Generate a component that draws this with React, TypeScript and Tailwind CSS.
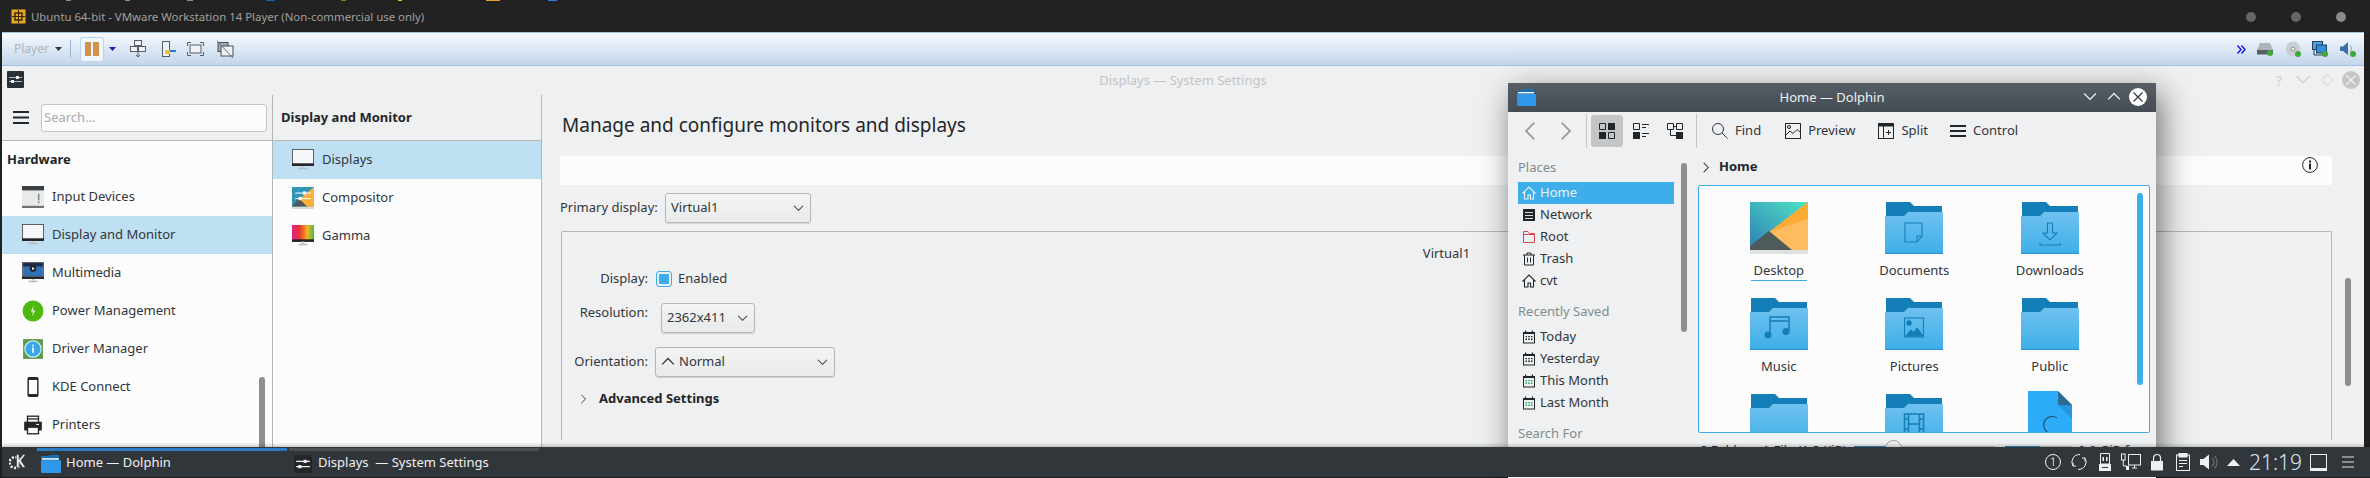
import React from "react";

const FONT = "font-['Noto_Sans','Open_Sans',sans-serif]";

const Chevron = ({ dir = "down", className = "", w = 12, color = "#4d4d4d" }: { dir?: string; className?: string; w?: number; color?: string }) => {
  const d: Record<string, string> = {
    down: "M1 3 L6 8 L11 3",
    up: "M1 8 L6 3 L11 8",
    left: "M8 1 L3 6 L8 11",
    right: "M4 1 L9 6 L4 11",
  };
  return (
    <svg width={w} height={w} viewBox="0 0 12 12" className={className} fill="none" stroke={color} strokeWidth="1.1">
      <path d={d[dir]} />
    </svg>
  );
};

const MonitorFrame = ({ children, bezel = "#232629" }: { children?: React.ReactNode; bezel?: string }) => (
  <svg width="22" height="22" viewBox="0 0 20 20" className="shrink-0">
    <rect x="6" y="17" width="8" height="1.4" fill="#b9bcbe" />
    <rect x="9" y="15" width="2" height="2" fill="#c8cacc" />
    <rect x="0.5" y="0.5" width="19" height="14.5" fill="#f4f6f8" stroke="#4d4f52" strokeWidth="0.8" />
    {children}
    <rect x="0" y="13" width="20" height="2.4" fill={bezel} />
  </svg>
);

const InputIcon = () => (
  <svg width="22" height="22" viewBox="0 0 20 20" className="shrink-0">
    <rect y="0" width="20" height="20" fill="#e9eaea" />
    <rect y="0" width="20" height="4" fill="#3b4045" />
    <rect y="18" width="20" height="2" fill="#6f7376" />
    <rect x="14.5" y="7" width="1.4" height="6" fill="#7f8c8d" />
    <rect x="14.5" y="14" width="1.4" height="1.5" fill="#7f8c8d" />
  </svg>
);

const PowerIcon = () => (
  <svg width="22" height="22" viewBox="0 0 20 20" className="shrink-0">
    <circle cx="10" cy="10" r="9.5" fill="#4fb80f" />
    <path d="M10.8 5 L8 10.5 H10 L9.2 15 L12 9.5 H10Z" fill="#e8f8dc" />
  </svg>
);

const DriverIcon = () => (
  <svg width="22" height="22" viewBox="0 0 20 20" className="shrink-0">
    <rect x="1" y="1" width="18" height="18" fill="#5b9a4a" />
    <circle cx="10" cy="10" r="7.4" fill="#39a9e6" stroke="#d8f0fb" strokeWidth="1" />
    <rect x="9.2" y="8.6" width="1.6" height="5" fill="#e8f6fd" />
    <rect x="9.2" y="6" width="1.6" height="1.6" fill="#e8f6fd" />
  </svg>
);

const PhoneIcon = () => (
  <svg width="22" height="22" viewBox="0 0 20 20" className="shrink-0">
    <rect x="5.6" y="1.6" width="8.8" height="16.8" rx="1" fill="#fcfcfc" stroke="#232629" strokeWidth="1.3" />
    <rect x="5.6" y="1.6" width="8.8" height="2" fill="#232629" />
    <rect x="5.6" y="16.4" width="8.8" height="2" fill="#232629" />
  </svg>
);

const PrinterIcon = () => (
  <svg width="22" height="22" viewBox="0 0 20 20" className="shrink-0" fill="none" stroke="#232629" strokeWidth="1.2">
    <rect x="5" y="2" width="10" height="6" />
    <path d="M5 4.5 H15" />
    <rect x="2.6" y="7.6" width="14.8" height="6.8" fill="#232629" />
    <rect x="5" y="12" width="10" height="6" fill="#fcfcfc" />
    <rect x="13" y="9" width="2.4" height="1" fill="#fcfcfc" stroke="none" />
  </svg>
);

const SliderGlyph = () => (
  <g>
    <rect x="3" y="5" width="14" height="1" fill="#f4f6f8" />
    <rect x="10" y="4" width="3" height="3" fill="#f4f6f8" />
    <rect x="3" y="10" width="14" height="1" fill="#f4f6f8" />
    <rect x="6" y="9" width="3" height="3" fill="#f4f6f8" />
  </g>
);

const categories: { label: string; icon: React.ReactNode; active?: boolean }[] = [
  { label: "Input Devices", icon: <InputIcon /> },
  { label: "Display and Monitor", icon: <MonitorFrame />, active: true },
  {
    label: "Multimedia",
    icon: (
      <MonitorFrame>
        <rect x="1" y="1" width="18" height="12" fill="#2f6fb6" />
        <rect x="1" y="1" width="18" height="3" fill="#1c2c44" />
        <circle cx="10" cy="6" r="3" fill="#1f2326" />
        <path d="M9.2 4.6 L11.6 6 L9.2 7.4Z" fill="#fff" />
      </MonitorFrame>
    ),
  },
  { label: "Power Management", icon: <PowerIcon /> },
  { label: "Driver Manager", icon: <DriverIcon /> },
  { label: "KDE Connect", icon: <PhoneIcon /> },
  { label: "Printers", icon: <PrinterIcon /> },
];

const subItems: { label: string; icon: React.ReactNode; active?: boolean }[] = [
  { label: "Displays", icon: <MonitorFrame />, active: true },
  {
    label: "Compositor",
    icon: (
      <svg width="22" height="22" viewBox="0 0 20 20" className="shrink-0">
        <rect width="20" height="18" fill="#2f97b5" />
        <path d="M20 0 V18 H8 L3 14Z" fill="#fdaf3b" />
        <path d="M0 18 L6 10 L14 18Z" fill="#50585c" />
        <rect y="18" width="20" height="2" fill="#d7dadb" />
        <SliderGlyph />
      </svg>
    ),
  },
  {
    label: "Gamma",
    icon: (
      <svg width="22" height="22" viewBox="0 0 20 20" className="shrink-0">
        <defs>
          <linearGradient id="gammaA" x1="0" x2="1" y1="0" y2="0">
            <stop offset="0" stopColor="#e0208c" />
            <stop offset="0.35" stopColor="#e8352c" />
            <stop offset="0.7" stopColor="#f2b320" />
            <stop offset="1" stopColor="#3fbf50" />
          </linearGradient>
        </defs>
        <rect y="0" width="20" height="14" fill="url(#gammaA)" />
        <rect y="13" width="20" height="2.4" fill="#232629" />
        <rect x="9" y="15" width="2" height="2" fill="#c8cacc" />
        <rect x="6" y="17" width="8" height="1.4" fill="#b9bcbe" />
      </svg>
    ),
  },
];

const Combo = ({ width, children }: { width: string; children: React.ReactNode }) => (
  <div className={`${width} h-[30px] shrink-0 flex items-center justify-between pl-[5px] pr-[6px] rounded-[3px] border border-[#b4b6b8] bg-gradient-to-b from-[#f3f4f4] to-[#e9eaeb] shadow-[0_1px_1px_rgba(0,0,0,0.12)] text-[#31363b]`}>
    <span className="flex items-center gap-[4px]">{children}</span>
    <Chevron dir="down" w={11} color="#31363b" />
  </div>
);

const Folder = ({ id, overlay }: { id: string; overlay?: React.ReactNode }) => (
  <svg width="58" height="52" viewBox="0 0 58 52">
    <defs>
      <linearGradient id={id} x1="0" x2="0" y1="0" y2="1">
        <stop offset="0" stopColor="#6fc1ef" />
        <stop offset="1" stopColor="#3daee9" />
      </linearGradient>
    </defs>
    <path d="M1 0 H25 L29 4 H57 V14 H1Z" fill="#147eb8" />
    <path d="M0 14 H19 L23 10 H58 V52 H0Z" fill={`url(#${id})`} />
    <rect y="51" width="58" height="1" fill="#2a8fcc" />
    <g fill="none" stroke="#147eb8" strokeWidth="1.1">{overlay}</g>
  </svg>
);

const DesktopThumb = () => (
  <svg width="58" height="52" viewBox="0 0 58 52">
    <defs>
      <linearGradient id="thumbBg" x1="0" x2="1" y1="1" y2="0">
        <stop offset="0" stopColor="#2f7fb6" />
        <stop offset="1" stopColor="#4fe3c4" />
      </linearGradient>
    </defs>
    <rect width="58" height="48" fill="url(#thumbBg)" />
    <path d="M58 0 V48 H40 L19 30Z" fill="#fdac33" />
    <path d="M19 30 L58 17 V48 H40Z" fill="#fdbd5e" />
    <path d="M0 48 V44 L19 29 L42 48Z" fill="#4f5a5a" />
    <rect y="48" width="58" height="4" fill="#dfe1e1" />
  </svg>
);

const FileThumb = () => (
  <svg width="44" height="60" viewBox="0 0 44 60" className="-mt-[3px]">
    <path d="M0 0 H30 L44 14 V60 H0Z" fill="#2cabf8" />
    <path d="M30 0 L44 14 H30Z" fill="#2f6a93" />
    <path d="M30 14 H44 V28Z" fill="#2696db" />
    <path d="M30 27 A8.5 8.5 0 1 0 30 41" fill="none" stroke="#1d4f73" strokeWidth="1.2" transform="translate(-1 0)" />
  </svg>
);

// third row is cut off by the view, its labels never show
const files: { key: string; label?: string; thumb: React.ReactNode; underline?: boolean }[] = [
  { key: "desktop", label: "Desktop", thumb: <DesktopThumb />, underline: true },
  {
    key: "docs",
    label: "Documents",
    thumb: <Folder id="fDocs" overlay={<path d="M20 21 H37 V34 L32 40 H20Z M37 34 H32 V40" />} />,
  },
  {
    key: "down",
    label: "Downloads",
    thumb: <Folder id="fDown" overlay={<path d="M26.5 21 H31.5 V31 H36 L29 38 L22 31 H26.5 Z M19 41 V43 H39 V41" />} />,
  },
  {
    key: "music",
    label: "Music",
    thumb: (
      <Folder
        id="fMusic"
        overlay={
          <>
            <path d="M20 36 V19 H39 V33 M20 23 H39" strokeWidth="1.5" />
            <circle cx="18" cy="37" r="3" fill="#147eb8" />
            <circle cx="36" cy="33.5" r="3" fill="#147eb8" />
          </>
        }
      />
    ),
  },
  {
    key: "pics",
    label: "Pictures",
    thumb: (
      <Folder
        id="fPics"
        overlay={
          <>
            <rect x="19.5" y="20" width="19" height="19" />
            <circle cx="24" cy="25" r="2.2" fill="#147eb8" />
            <path d="M21 38 L26 32 L29 35 L32 30 L38 38Z" fill="#147eb8" />
          </>
        }
      />
    ),
  },
  { key: "pub", label: "Public", thumb: <Folder id="fPub" /> },
  { key: "tpl", thumb: <Folder id="fTpl" /> },
  {
    key: "vid",
    thumb: (
      <Folder
        id="fVid"
        overlay={<path d="M19.5 20 H38.5 V40 H19.5Z M23.5 20 V40 M34.5 20 V40 M23.5 30 H34.5 M19.5 25 H23.5 M34.5 25 H38.5 M19.5 35 H23.5 M34.5 35 H38.5" strokeWidth="1.6" />}
      />
    ),
  },
  { key: "cvt", thumb: <FileThumb /> },
];

const HomeGlyph = ({ color }: { color: string }) => (
  <svg width="14" height="14" viewBox="0 0 14 14" fill="none" stroke={color} strokeWidth="1.1">
    <path d="M0.5 7.5 L7 1 L13.5 7.5 M2.5 6 V13 H6 V9 H8.5 V13 H11.5 V6" />
  </svg>
);

const NetworkGlyph = () => (
  <svg width="14" height="14" viewBox="0 0 14 14">
    <rect x="1" y="1" width="12" height="12" fill="#232629" />
    <path d="M3 4.5 H11 M3 7.5 H11 M3 10.5 H11" stroke="#eff0f1" strokeWidth="0.9" />
  </svg>
);

const RootGlyph = () => (
  <svg width="14" height="14" viewBox="0 0 14 14" fill="none" stroke="#da4453" strokeWidth="1">
    <path d="M1.5 12.5 V1.5 H6 L7.5 3.5 H12.5 V12.5Z M1.5 4.5 H12.5" />
  </svg>
);

const TrashGlyph = () => (
  <svg width="14" height="14" viewBox="0 0 14 14" fill="none" stroke="#232629" strokeWidth="1">
    <path d="M1 3 H13 M5 3 V1 H9 V3 M2.5 3 V13 H11.5 V3 M5.5 5.5 V10.5 M8.5 5.5 V10.5" />
  </svg>
);

const CalendarGlyph = ({ color = "#232629" }: { color?: string }) => (
  <svg width="14" height="14" viewBox="0 0 14 14">
    <rect x="1.5" y="2.5" width="11" height="10.5" fill="none" stroke="#232629" />
    <rect x="1" y="2" width="12" height="2" fill="#232629" />
    <rect x="3" y="0.5" width="1.2" height="2" fill="#232629" />
    <rect x="9.8" y="0.5" width="1.2" height="2" fill="#232629" />
    <path d="M3.5 6 H5 V7.3 H3.5Z M6.2 6 H7.8 V7.3 H6.2Z M9 6 H10.5 V7.3 H9Z M3.5 8.6 H5 V10 H3.5Z M6.2 8.6 H7.8 V10 H6.2Z M9 8.6 H10.5 V10 H9Z" fill={color} />
  </svg>
);

const PlaceRow = ({ icon, label, active }: { icon: React.ReactNode; label: string; active?: boolean }) => (
  <div className={`h-[22px] w-[156px] flex items-center pl-[4px] ${active ? "bg-[#3daee9] text-[#eff0f1]" : "text-[#31363b]"}`}>
    <span className="w-[14px] h-[14px] flex">{icon}</span>
    <span className="ml-[4px]">{label}</span>
  </div>
);

const ToolLabel = ({ icon, label, className = "" }: { icon: React.ReactNode; label: string; className?: string }) => (
  <div className={`flex items-center gap-[7px] text-[#31363b] ${className}`}>
    {icon}
    <span>{label}</span>
  </div>
);

const Dolphin = () => (
  <div className={`absolute left-[1508px] top-[83px] z-10 w-[648px] h-[400px] bg-[#eff0f1] shadow-[5px_10px_30px_rgba(0,0,0,0.55)] overflow-hidden text-[13px] ${FONT}`}>
    <div className="relative h-[29px] flex items-center justify-center bg-gradient-to-b from-[#565e66] to-[#454c53] text-[#eff0f1]">
      <svg width="19" height="17" viewBox="0 0 19 17" className="absolute left-[9px] top-[6px]">
        <path d="M0 1 H7 L8 0 H17 V6 H0Z" fill="#1a6fb0" />
        <rect x="1" y="3" width="16" height="1.4" fill="#fff" />
        <rect y="5" width="19" height="12" rx="1" fill="#2f98ea" />
      </svg>
      <span>Home — Dolphin</span>
      <div className="absolute right-[9px] top-[5px] flex items-center">
        <Chevron dir="down" w={14} color="#eff0f1" />
        <Chevron dir="up" w={14} color="#eff0f1" className="ml-[10px]" />
        <span className="ml-[8px] w-[18px] h-[18px] rounded-full bg-white flex items-center justify-center">
          <svg width="10" height="10" viewBox="0 0 10 10" stroke="#31363b" strokeWidth="1.2">
            <path d="M0.5 0.5 L9.5 9.5 M9.5 0.5 L0.5 9.5" />
          </svg>
        </span>
      </div>
    </div>

    <div className="h-[38px] flex items-center">
      <Chevron dir="left" w={20} color="#9a9c9e" className="ml-[13px]" />
      <Chevron dir="right" w={20} color="#9a9c9e" className="ml-[14px]" />
      <div className="ml-[11px] w-px h-[34px] bg-[#c4c5c6]" />
      <div className="ml-[4px] w-[32px] h-[32px] rounded-[3px] bg-[#c4c5c6] flex items-center justify-center">
        <svg width="16" height="16" viewBox="0 0 16 16" fill="#232629">
          <path d="M0.5 0.5 H6.5 V6.5 H0.5Z M9.5 9.5 H15.5 V15.5 H9.5Z" fill="none" stroke="#232629" />
          <rect x="9" width="7" height="7" />
          <rect y="9" width="7" height="7" />
        </svg>
      </div>
      <div className="w-[36px] flex justify-center">
        <svg width="16" height="16" viewBox="0 0 16 16" fill="#232629">
          <path d="M0.5 0.5 H6.5 V6.5 H0.5Z" fill="none" stroke="#232629" />
          <rect y="9" width="7" height="7" />
          <rect x="9" y="1" width="7" height="1" />
          <rect x="9" y="4" width="4" height="1" />
          <rect x="9" y="10" width="7" height="1" />
          <rect x="9" y="13" width="4" height="1" />
        </svg>
      </div>
      <div className="w-[32px] flex justify-center">
        <svg width="16" height="16" viewBox="0 0 16 16" fill="#232629">
          <path d="M0.5 0.5 H6.5 V6.5 H0.5Z M9.5 0.5 H15.5 V6.5 H9.5Z M3.5 6.5 V12.5 H9 M6.5 3.5 H9.5" fill="none" stroke="#232629" />
          <rect x="9" y="9" width="7" height="7" />
        </svg>
      </div>
      <div className="ml-[5px] w-px h-[34px] bg-[#c4c5c6]" />
      <ToolLabel
        className="ml-[15px]"
        label="Find"
        icon={
          <svg width="16" height="16" viewBox="0 0 16 16" fill="none" stroke="#31363b" strokeWidth="1">
            <circle cx="6" cy="6" r="5.5" />
            <path d="M10 10 L15.5 15.5" />
          </svg>
        }
      />
      <ToolLabel
        className="ml-[24px]"
        label="Preview"
        icon={
          <svg width="16" height="16" viewBox="0 0 16 16" fill="none" stroke="#232629" strokeWidth="1">
            <rect x="0.5" y="0.5" width="15" height="15" />
            <circle cx="4" cy="4" r="1.5" />
            <path d="M1 12 L5 8 L8 10.5 L12 6.5 L15 9" />
          </svg>
        }
      />
      <ToolLabel
        className="ml-[23px]"
        label="Split"
        icon={
          <svg width="16" height="16" viewBox="0 0 16 16" fill="none" stroke="#232629" strokeWidth="1">
            <rect x="0.5" y="0.5" width="15" height="15" />
            <rect y="0" width="16" height="3" fill="#232629" />
            <path d="M5.5 3 V16 M8 9.5 H13 M10.5 7 V12" />
          </svg>
        }
      />
      <ToolLabel
        className="ml-[22px]"
        label="Control"
        icon={
          <svg width="16" height="14" viewBox="0 0 16 14" fill="#232629">
            <rect y="1" width="16" height="2" />
            <rect y="6" width="16" height="2" />
            <rect y="11" width="16" height="2" />
          </svg>
        }
      />
    </div>

    <div className="relative flex">
      <div className="w-[190px] shrink-0 pl-[10px] pt-[8px]">
        <div className="h-[18px] leading-[18px] text-[#7f8c8d]">Places</div>
        <div className="mt-[6px]">
          <PlaceRow active label="Home" icon={<HomeGlyph color="#eff0f1" />} />
          <PlaceRow label="Network" icon={<NetworkGlyph />} />
          <PlaceRow label="Root" icon={<RootGlyph />} />
          <PlaceRow label="Trash" icon={<TrashGlyph />} />
          <PlaceRow label="cvt" icon={<HomeGlyph color="#232629" />} />
        </div>
        <div className="mt-[10px] h-[18px] leading-[18px] text-[#7f8c8d]">Recently Saved</div>
        <div className="mt-[6px]">
          <PlaceRow label="Today" icon={<CalendarGlyph />} />
          <PlaceRow label="Yesterday" icon={<CalendarGlyph />} />
          <PlaceRow label="This Month" icon={<CalendarGlyph color="#27ae60" />} />
          <PlaceRow label="Last Month" icon={<CalendarGlyph color="#27ae60" />} />
        </div>
        <div className="mt-[10px] h-[18px] leading-[18px] text-[#7f8c8d]">Search For</div>
      </div>
      <div className="absolute left-[173px] top-[13px] w-[6px] h-[169px] rounded-full bg-[#8e8e8e]" />

      <div className="w-[452px] shrink-0">
        <div className="h-[35px] flex items-center pb-[1px]">
          <Chevron dir="right" w={11} color="#31363b" className="ml-[2px]" />
          <span className="ml-[8px] font-bold text-[#232629]">Home</span>
        </div>
        <div className="relative h-[248px] overflow-hidden rounded-[2px] border border-[#3daee9] bg-[#fcfcfc] pl-[12px] pt-[16px]">
          <div className="grid grid-cols-[repeat(3,135.5px)] auto-rows-[96px]">
            {files.map((f) => (
              <div key={f.key} className="flex flex-col items-center">
                <div className="h-[52px] flex justify-center">{f.thumb}</div>
                {f.label && (
                  <span className={`mt-[7px] h-[20px] leading-[18px] px-[1px] text-[#31363b] ${f.underline ? "w-[56px] text-center border-b border-[#3daee9]" : ""}`}>
                    {f.label}
                  </span>
                )}
              </div>
            ))}
          </div>
          <div className="absolute right-[6px] top-[7px] w-[6px] h-[192px] rounded-full bg-[#3daee9]" />
        </div>
        <div className="relative flex items-start pt-[8px] pl-[2px] text-[#31363b]">
          <span className="w-[154px] shrink-0 leading-[18px] whitespace-nowrap">8 Folders, 1 File (1.2 KiB)</span>
          <div className="mt-[5px] w-[141px] h-[4px] bg-[#c4c5c6] shrink-0">
            <div className="w-[31px] h-[4px] bg-[#2980b9]" />
          </div>
          <div className="absolute left-[187px] top-[7px] w-[17px] h-[17px] rounded-full border border-[#9a9c9e] bg-[#eff0f1]" />
          <div className="ml-[10px] mt-[5px] w-[67px] h-[4px] bg-[#c4c5c6] shrink-0">
            <div className="w-[35px] h-[4px] bg-[#2980b9]" />
          </div>
          <span className="ml-[6px] leading-[18px] whitespace-nowrap">9.9 GiB free</span>
        </div>
      </div>
    </div>
  </div>
);

const Tray = () => (
  <div className="ml-auto flex items-center h-full text-[#eff0f1]">
    <svg width="18" height="18" viewBox="0 0 18 18" fill="none" stroke="#eff0f1">
      <circle cx="9" cy="9" r="7.5" />
      <path d="M7.5 6 L9.4 5 V13" stroke="#f2c078" strokeWidth="1.1" />
    </svg>
    <svg width="18" height="18" viewBox="0 0 18 18" fill="none" stroke="#eff0f1" className="ml-[8px]">
      <path d="M3 13 A7.5 7.5 0 0 1 10 1.6 M15 5 A7.5 7.5 0 0 1 8 16.4 M3 13 L3 9.5 M3 13 L6 13 M15 5 V8.5 M15 5 H12" />
    </svg>
    <svg width="14" height="18" viewBox="0 0 14 18" className="ml-[10px]">
      <path d="M2.5 0.5 H11.5 V11 H2.5Z" fill="none" stroke="#eff0f1" />
      <rect x="4.5" y="4" width="1.5" height="4" fill="#eff0f1" />
      <rect x="8" y="4" width="1.5" height="4" fill="#eff0f1" />
      <rect x="1" y="11" width="12" height="7" fill="#eff0f1" />
      <rect x="4" y="14" width="6" height="1" fill="#31363b" />
    </svg>
    <svg width="20" height="18" viewBox="0 0 20 18" fill="none" stroke="#eff0f1" className="ml-[9px]">
      <rect x="0.5" y="1" width="3.6" height="6" />
      <rect x="7.5" y="1.5" width="12" height="10.5" />
      <path d="M2.3 7 V13 H6 M11 15 H16 M13.5 12 V15" />
      <rect x="5" y="13" width="3" height="4" fill="#eff0f1" stroke="none" />
    </svg>
    <svg width="14" height="18" viewBox="0 0 14 18" className="ml-[9px]">
      <path d="M3.5 9 V5 A3.5 3.5 0 0 1 10.5 5 V9" fill="none" stroke="#eff0f1" strokeWidth="1.2" />
      <rect x="1" y="8" width="12" height="9.5" fill="#eff0f1" />
    </svg>
    <svg width="14" height="18" viewBox="0 0 14 18" fill="none" stroke="#eff0f1" className="ml-[12px]">
      <rect x="0.5" y="2" width="13" height="15.5" />
      <rect x="3" y="0.5" width="8" height="3.5" fill="#eff0f1" />
      <path d="M3 7.5 H11 M3 10.5 H11 M3 13.5 H7" />
    </svg>
    <svg width="18" height="16" viewBox="0 0 18 16" className="ml-[10px]">
      <path d="M0 5 H3.5 L9 0.5 V15.5 L3.5 11 H0Z" fill="#eff0f1" />
      <path d="M12 4 A5 5 0 0 1 12 12 M14.5 2 A8 8 0 0 1 14.5 14" fill="none" stroke="#6a6e72" strokeWidth="1.2" />
    </svg>
    <svg width="13" height="7" viewBox="0 0 13 7" className="ml-[9px]">
      <path d="M0 7 L6.5 0 L13 7Z" fill="#eff0f1" />
    </svg>
    <span className="ml-[9px] w-[52px] text-[21px] font-light leading-none text-[#d3e6f5]">21:19</span>
    <svg width="17" height="17" viewBox="0 0 17 17" fill="none" stroke="#eff0f1" className="ml-[9px]">
      <rect x="0.5" y="0.5" width="16" height="16" />
      <rect x="0" y="14" width="17" height="3" fill="#eff0f1" stroke="none" />
    </svg>
    <svg width="12" height="12" viewBox="0 0 12 12" fill="#8a8e92" className="ml-[15px] mr-[16px]">
      <rect width="12" height="2" />
      <rect y="5" width="12" height="2" />
      <rect y="10" width="12" height="2" />
    </svg>
  </div>
);

const Taskbar = () => (
  <div className={`relative z-20 ml-[2px] h-[30px] flex items-center bg-[#31363b] shadow-[0_-2px_3px_rgba(0,0,0,0.2)] text-[13px] ${FONT}`}>
    <svg width="17" height="17" viewBox="0 0 16 17" className="ml-[7px]" fill="#eff0f1">
      <circle cx="5.5" cy="8.5" r="5.4" fill="none" stroke="#eff0f1" strokeWidth="2.6" strokeDasharray="2 1.6" />
      <path d="M7 0.5 H9.5 V5.5 L13.5 0.5 H16 L11.5 6.5 L16 13.5 H13.2 L9.5 8 V13.5 H7Z" stroke="#31363b" strokeWidth="0.6" />
    </svg>
    <div className="relative ml-[11px] w-[250px] h-full flex items-center pl-[4px] text-[#eff0f1]">
      <div className="absolute left-0 right-0 top-[1px] h-[3px] bg-[#2a7bc4]" />
      <svg width="20" height="18" viewBox="0 0 19 17" className="mt-[3px]">
        <path d="M0 1 H7 L8 0 H17 V6 H0Z" fill="#1a6fb0" />
        <rect x="1" y="3" width="16" height="1.4" fill="#fff" />
        <rect y="5" width="19" height="12" rx="1" fill="#2f98ea" />
      </svg>
      <span className="ml-[5px] mt-[1px]">Home — Dolphin</span>
    </div>
    <div className="relative ml-[2px] w-[250px] h-full flex items-center pl-[5px] text-[#eff0f1]">
      <div className="absolute left-0 right-0 top-[1px] h-[3px] bg-[#4b5055]" />
      <svg width="18" height="18" viewBox="0 0 17 17" className="mt-[3px]">
        <rect width="17" height="17" rx="1" fill="#232629" />
        <path d="M2 6 H15 M2 11 H15" stroke="#eff0f1" />
        <rect x="9" y="4.5" width="3" height="3" fill="#eff0f1" />
        <rect x="4" y="9.5" width="3" height="3" fill="#eff0f1" />
      </svg>
      <span className="ml-[6px] mt-[1px] whitespace-pre">Displays  — System Settings</span>
    </div>
    <Tray />
  </div>
);

const VmwareBar = () => (
  <>
    <div className="h-px flex">
      <span className="ml-[66px] w-[5px] bg-[#8a8a8a]" />
      <span className="ml-[54px] w-[5px] bg-[#8a8a8a]" />
      <span className="ml-[57px] w-[6px] bg-[#8a8a8a]" />
      <span className="ml-[73px] w-[9px] bg-[#1c5fa8]" />
      <span className="ml-[66px] w-[5px] bg-[#8a7a20]" />
      <span className="ml-[52px] w-[4px] bg-[#d8c030]" />
      <span className="ml-[84px] w-[14px] bg-[#e0a020]" />
      <span className="ml-[48px] w-[9px] bg-[#3f78d8]" />
    </div>
    <div className={`relative h-[31px] flex items-center bg-[#222222] text-[11.4px] text-[#a0a0a0] ${FONT}`}>
      <svg width="15" height="15" viewBox="0 0 15 15" className="ml-[11px]" fill="none">
        <rect x="0.5" y="0.5" width="14" height="14" fill="#e8a820" />
        <rect x="4" y="4" width="7" height="7" stroke="#3a2a08" strokeWidth="1.5" />
        <path d="M7.5 1 V14 M1 7.5 H14" stroke="#3a2a08" />
      </svg>
      <span className="ml-[5px]">Ubuntu 64-bit - VMware Workstation 14 Player (Non-commercial use only)</span>
      <div className="ml-auto mr-[24px] flex gap-[35px]">
        <span className="w-[10px] h-[10px] rounded-full bg-[#666666]" />
        <span className="w-[10px] h-[10px] rounded-full bg-[#666666]" />
        <span className="w-[10px] h-[10px] rounded-full bg-[#8a8a8a]" />
      </div>
    </div>
    <div className={`ml-[2px] mr-[6px] h-[34px] flex items-center border-y border-[#a3c1e2] bg-gradient-to-b from-[#f6f9fe] to-[#c3d6eb] text-[12px] ${FONT}`}>
      <span className="ml-[12px] text-[#aeb5bf]">Player</span>
      <svg width="7" height="4" viewBox="0 0 7 4" className="ml-[6px]"><path d="M0 0 H7 L3.5 4Z" fill="#333" /></svg>
      <div className="ml-[8px] w-px h-[18px] bg-[#9db6d3]" />
      <div className="ml-[9px] w-[24px] h-[25px] rounded-[2px] border border-[#bcd4ee] bg-[#f1f6fc] flex items-center justify-center gap-[2px]">
        <span className="w-[6px] h-[14px] bg-[#d1924f]" />
        <span className="w-[6px] h-[14px] bg-[#d1924f]" />
      </div>
      <svg width="7" height="4" viewBox="0 0 7 4" className="ml-[5px]"><path d="M0 0 H7 L3.5 4Z" fill="#1b22b8" /></svg>
      <svg width="16" height="18" viewBox="0 0 16 18" fill="#eef2f7" stroke="#5a5f66" className="ml-[14px]">
        <rect x="4.5" y="0.5" width="7" height="5" />
        <rect x="0.5" y="6.5" width="7" height="5" />
        <rect x="8.5" y="6.5" width="7" height="5" />
        <path d="M8 12 V17 M6 15 L8 17 L10 15" fill="none" />
      </svg>
      <svg width="14" height="16" viewBox="0 0 14 16" className="ml-[16px]" fill="none" stroke="#5a5f66">
        <rect x="0.5" y="0.5" width="7" height="15" fill="#eef2f7" />
        <rect x="3" y="9" width="5" height="4" fill="#e8c040" stroke="none" />
        <path d="M8 10 H14" stroke="#2a7bc4" strokeWidth="2" />
      </svg>
      <svg width="17" height="14" viewBox="0 0 17 14" fill="none" stroke="#5a5f66" className="ml-[11px]">
        <rect x="3" y="3" width="11" height="8" fill="#eef2f7" />
        <path d="M0.5 4 V0.5 H4 M13 0.5 H16.5 V4 M16.5 10 V13.5 H13 M4 13.5 H0.5 V10" />
      </svg>
      <svg width="17" height="17" viewBox="0 0 17 17" fill="none" stroke="#4a4f55" className="ml-[13px]">
        <rect x="1" y="1.5" width="10" height="9" fill="#a8adb3" />
        <rect x="4" y="5" width="12" height="10" fill="#eef2f7" />
        <path d="M0 0 L16 17" stroke="#6a7078" />
      </svg>
      <div className="ml-auto mr-[8px] flex items-center">
        <svg width="9" height="9" viewBox="0 0 9 9" fill="none" stroke="#1414e0" strokeWidth="1.4">
          <path d="M0.5 0.5 L4 4.5 L0.5 8.5 M4.5 0.5 L8 4.5 L4.5 8.5" />
        </svg>
        <svg width="16" height="14" viewBox="0 0 16 14" className="ml-[11px]">
          <path d="M3 1 H13 L16 8 H0Z" fill="#aeb4ba" />
          <rect y="8" width="16" height="4.5" fill="#5a6068" />
          <circle cx="13" cy="11" r="3" fill="#3fa83a" />
        </svg>
        <svg width="16" height="16" viewBox="0 0 16 16" className="ml-[12px]">
          <circle cx="8" cy="8" r="7.5" fill="#c9ced3" />
          <circle cx="8" cy="8" r="2" fill="#eef0f2" stroke="#8c9298" />
          <circle cx="13" cy="13" r="3" fill="#3fa83a" />
        </svg>
        <svg width="16" height="16" viewBox="0 0 16 16" className="ml-[11px]">
          <rect x="0.5" y="0.5" width="10" height="8" fill="#4aa0e6" stroke="#24405c" />
          <rect x="4.5" y="4" width="10" height="8" fill="#2f8fdc" stroke="#24405c" />
          <path d="M2 9 V14 H11" stroke="#24405c" fill="none" />
          <circle cx="13" cy="13" r="3" fill="#3fa83a" />
        </svg>
        <svg width="16" height="16" viewBox="0 0 16 16" className="ml-[12px]">
          <path d="M0 5.5 H3 L8 1 V14 L3 10 H0Z" fill="#3b6ea8" />
          <path d="M10 4 A5 5 0 0 1 10 11" fill="none" stroke="#8fa6be" />
          <circle cx="13" cy="13" r="3" fill="#3fa83a" />
        </svg>
      </div>
    </div>
  </>
);

const SettingsWindow = () => (
  <div className={`relative ml-[2px] mr-[6px] h-[381px] flex flex-col bg-[#eff0f1] text-[13px] text-[#31363b] ${FONT}`}>
    <div className="relative h-[29px] shrink-0 flex items-center justify-center text-[#c2c4c6]">
      <svg width="17" height="17" viewBox="0 0 17 17" className="absolute left-[5px] top-[5px]">
        <rect width="17" height="17" rx="1" fill="#2b3035" />
        <path d="M2 6.5 H15 M2 10.5 H15" stroke="#9fc3dd" />
        <rect x="9" y="5" width="3" height="3" fill="#eff0f1" />
        <rect x="4" y="9" width="3" height="3" fill="#eff0f1" />
      </svg>
      <span>Displays — System Settings</span>
      <div className="absolute right-[4px] top-[5px] flex items-center">
        <span className="w-[24px] text-center text-[15px] leading-[18px] text-[#cfd1d3]">?</span>
        <Chevron dir="down" w={16} color="#cfd1d3" className="ml-[4px]" />
        <svg width="12" height="12" viewBox="0 0 12 12" fill="none" stroke="#cfd1d3" className="ml-[10px]">
          <path d="M6 0.5 L11.5 6 L6 11.5 L0.5 6Z" />
        </svg>
        <span className="ml-[9px] w-[18px] h-[18px] rounded-full bg-[#c4c5c6] flex items-center justify-center">
          <svg width="10" height="10" viewBox="0 0 10 10" stroke="#eff0f1" strokeWidth="1.3">
            <path d="M0.5 0.5 L9.5 9.5 M9.5 0.5 L0.5 9.5" />
          </svg>
        </span>
      </div>
    </div>

    <div className="flex-1 flex min-h-0">
      <div className="relative w-[271px] shrink-0 flex flex-col border-r border-[#b5b7b9]">
        <div className="h-[46px] shrink-0 flex items-center border-b border-[#b5b7b9]">
          <svg width="16" height="13" viewBox="0 0 16 13" fill="#232629" className="ml-[11px]">
            <rect width="16" height="2" />
            <rect y="5.5" width="16" height="2" />
            <rect y="11" width="16" height="2" />
          </svg>
          <div className="ml-[12px] w-[226px] h-[28px] flex items-center pl-[2px] rounded-[3px] border border-[#c4c5c6] bg-[#fcfcfc] text-[#a8aaac]">
            Search...
          </div>
        </div>
        <div className="flex-1 bg-[#fcfcfc]">
          <div className="h-[37px] flex items-center pl-[5px] font-bold text-[#232629]">Hardware</div>
          {categories.map((c) => (
            <div key={c.label} className={`h-[38px] flex items-center pl-[20px] gap-[8px] ${c.active ? "bg-[#bfdff3]" : ""}`}>
              {c.icon}
              <span>{c.label}</span>
            </div>
          ))}
        </div>
        <div className="absolute left-[257px] top-[282px] w-[6px] h-[72px] rounded-t-full bg-[#8e8e8e]" />
      </div>

      <div className="w-[269px] shrink-0 flex flex-col border-r border-[#b5b7b9]">
        <div className="h-[46px] shrink-0 flex items-center pl-[8px] border-b border-[#b5b7b9] font-bold text-[#232629]">
          Display and Monitor
        </div>
        <div className="flex-1 bg-[#fcfcfc]">
          {subItems.map((s) => (
            <div key={s.label} className={`h-[38px] flex items-center pl-[19px] gap-[8px] ${s.active ? "bg-[#bfdff3]" : ""}`}>
              {s.icon}
              <span>{s.label}</span>
            </div>
          ))}
        </div>
      </div>

      <div className="relative flex-1 pl-[18px] pr-[32px] pt-[15px]">
        <div className="h-[30px] pl-[2px] flex items-center text-[19px] text-[#232629]">
          Manage and configure monitors and displays
        </div>
        <div className="mt-[16px] h-[29px] bg-[#fcfcfc] flex justify-end pr-[14px] pt-[1px]">
          <svg width="16" height="16" viewBox="0 0 16 16" fill="none" stroke="#232629">
            <circle cx="8" cy="8" r="7.4" />
            <rect x="7" y="6.5" width="2" height="6" fill="#232629" stroke="none" />
            <rect x="7" y="3.5" width="2" height="2" fill="#232629" stroke="none" />
          </svg>
        </div>
        <div className="mt-[8px] flex items-center">
          <span className="w-[105px]">Primary display:</span>
          <Combo width="w-[146px]">Virtual1</Combo>
        </div>
        <div className="mt-[8px] ml-px h-[209px] rounded-t-[2px] border-x border-t border-[#b5b7b9] pt-[12px]">
          <div className="h-[18px] leading-[18px] text-center">Virtual1</div>
          <div className="mt-[9px] flex items-center h-[16px]">
            <span className="w-[86px] text-right">Display:</span>
            <span className="ml-[8px] w-[16px] h-[16px] rounded-[3px] border border-[#3daee9] flex items-center justify-center">
              <span className="w-[10px] h-[10px] bg-[#3daee9]" />
            </span>
            <span className="ml-[6px]">Enabled</span>
          </div>
          <div className="mt-[16px] flex items-start">
            <span className="w-[86px] text-right leading-[18px]">Resolution:</span>
            <span className="ml-[13px]"><Combo width="w-[94px]">2362x411</Combo></span>
          </div>
          <div className="mt-[14px] flex items-center">
            <span className="w-[86px] text-right">Orientation:</span>
            <span className="ml-[7px]">
              <Combo width="w-[180px]">
                <Chevron dir="up" w={14} color="#31363b" />
                Normal
              </Combo>
            </span>
          </div>
          <div className="mt-[12px] h-[20px] flex items-center">
            <Chevron dir="right" w={10} color="#31363b" className="ml-[16px]" />
            <span className="ml-[11px] font-bold text-[#232629]">Advanced Settings</span>
          </div>
        </div>
        <div className="absolute right-[13px] top-[183px] w-[6px] h-[108px] rounded-full bg-[#8e8e8e]" />
      </div>
    </div>
  </div>
);

export default function App() {
  return (
    <div className="relative w-[2370px] h-[478px] overflow-hidden bg-[#1f1f1f]">
      <VmwareBar />
      <SettingsWindow />
      <Dolphin />
      <Taskbar />
    </div>
  );
}
